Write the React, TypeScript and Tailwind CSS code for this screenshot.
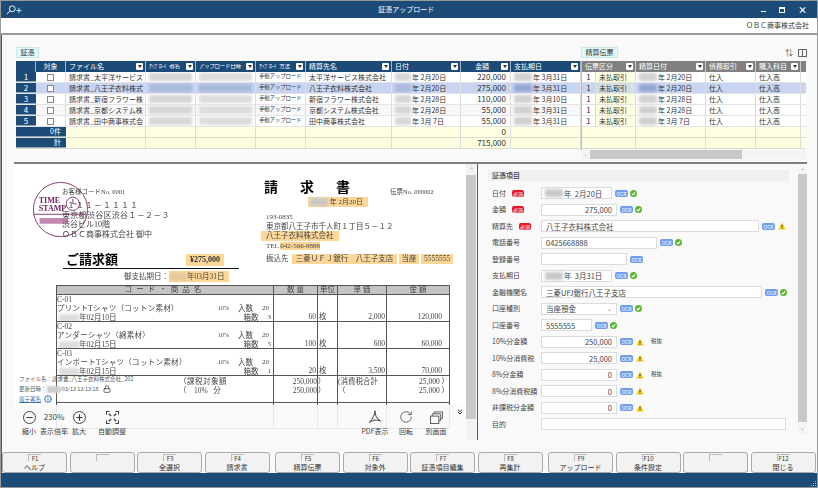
import { ChevronsDown, Info, Lock, Minus, Plus, RotateCw } from "lucide-react";

const jp = "font-['Noto_Sans_CJK_JP','Noto_Sans',sans-serif]";

const leftCols = [
  { name: "ファイル名", w: "w-[80px]" },
  { name: "ｱｯﾌﾟﾛｰﾄﾞ者名", w: "w-[50px]", small: true },
  { name: "アップロード日時", w: "w-[60px]", small: true },
  { name: "ｱｯﾌﾟﾛｰﾄﾞ方法", w: "w-[50px]", small: true },
  { name: "精算先名", w: "w-[86px]" },
  { name: "日付", w: "w-[69px]" },
  { name: "金額", w: "w-[50px]", center: true },
  { name: "支払期日", w: "w-[70px]" },
];

const rightCols = [
  { name: "伝票区分", w: "w-[54px]" },
  { name: "精算日付", w: "w-[70px]" },
  { name: "債務取引", w: "w-[50px]" },
  { name: "購入科目", w: "w-[45px]" },
];

const rows = [
  { file: "請求書_太平洋サービス", to: "太平洋サービス株式会社", date: "2月20日", amt: "220,000", due: "3月31日" },
  { file: "請求書_八王子衣料株式", to: "八王子衣料株式会社", date: "2月20日", amt: "275,000", due: "3月31日" },
  { file: "請求書_新宿フラワー株", to: "新宿フラワー株式会社", date: "2月28日", amt: "110,000", due: "3月10日" },
  { file: "請求書_京都システム株", to: "京都システム株式会社", date: "2月28日", amt: "55,000", due: "3月31日" },
  { file: "請求書_田中商事株式会", to: "田中商事株式会社", date: "3月 7日", amt: "55,000", due: "3月31日" },
];

const fkeys = [
  { k: "F1", label: "ヘルプ" },
  { k: "", label: "" },
  { k: "F3", label: "全選択" },
  { k: "F4", label: "請求書", gap: true },
  { k: "F5", label: "精算伝票" },
  { k: "F6", label: "対象外" },
  { k: "F7", label: "証憑項目編集" },
  { k: "F8", label: "再集計", gap: true },
  { k: "F9", label: "アップロード" },
  { k: "F10", label: "条件設定" },
  { k: "", label: "" },
  { k: "F12", label: "閉じる" },
];

type Field = {
  label: string;
  req?: boolean;
  value?: string;
  blur?: boolean;
  w: string;
  right?: boolean;
  select?: boolean;
  mark?: "ok" | "warn";
  ocr?: boolean;
  note?: string;
};

const fields: Field[] = [
  { label: "日付", req: true, value: "年  2月20日", blur: true, w: "w-[71px]", ocr: true, mark: "ok" },
  { label: "金額", req: true, value: "275,000", w: "w-[76px]", right: true, ocr: true, mark: "ok" },
  { label: "精算先", req: true, value: "八王子衣料株式会社", w: "w-[218px]", ocr: true, mark: "warn" },
  { label: "電話番号", value: "0425668888", w: "w-[116px]", ocr: true, mark: "ok" },
  { label: "登録番号", value: "", w: "w-[86px]", ocr: true },
  { label: "支払期日", value: "年  3月31日", blur: true, w: "w-[71px]", ocr: true, mark: "ok" },
  { label: "金融機関名", value: "三菱UFJ銀行八王子支店", w: "w-[221px]", ocr: true, mark: "ok" },
  { label: "口座種別", value: "当座預金", w: "w-[76px]", select: true, ocr: true, mark: "ok" },
  { label: "口座番号", value: "5555555", w: "w-[51px]", ocr: true, mark: "ok" },
  { label: "10%分金額", value: "250,000", w: "w-[76px]", right: true, ocr: true, mark: "warn", note: "税抜" },
  { label: "10%分消費税", value: "25,000", w: "w-[76px]", right: true, ocr: true, mark: "warn" },
  { label: "8%分金額", value: "0", w: "w-[76px]", right: true, ocr: true, mark: "warn", note: "税抜" },
  { label: "8%分消費税額", value: "0", w: "w-[76px]", right: true, ocr: true, mark: "warn" },
  { label: "非課税分金額", value: "0", w: "w-[76px]", right: true, ocr: true, mark: "warn" },
  { label: "目的", value: "", w: "w-[245px]" },
];

const Dropdown = () => (
  <span className="flex h-[7px] w-[7px] shrink-0 items-center justify-center rounded-[1px] bg-white">
    <span className="h-0 w-0 border-x-[2px] border-t-[3px] border-x-transparent border-t-[#333]" />
  </span>
);

const Blur = ({ w, tone = "bg-[#c8c8c8]" }: { w: string; tone?: string }) => (
  <div className={`h-[8px] ${w} ${tone} blur-[1.5px]`} />
);

const Ocr = () => (
  <span className="flex h-[7px] w-[13px] shrink-0 items-center justify-center rounded-[2px] bg-[#6f9df0] text-[5px] leading-none text-white">
    OCR
  </span>
);

const Ok = () => (
  <svg viewBox="0 0 10 10" className="h-[7px] w-[7px] shrink-0">
    <circle cx="5" cy="5" r="5" fill="#5cb531" />
    <path d="M2.6 5.2 4.4 7l3-3.6" fill="none" stroke="#fff" strokeWidth="1.5" />
  </svg>
);

const Warn = () => (
  <svg viewBox="0 0 10 10" className="h-[8px] w-[8px] shrink-0">
    <path d="M5 .5 9.8 9.5H.2Z" fill="#f7d117" />
    <path d="M5 3.5v3.2M5 7.5v1" stroke="#222" strokeWidth="1.1" />
  </svg>
);

const Cell = ({ className = "", children }: { className?: string; children?: React.ReactNode }) => (
  <div className={`flex h-full shrink-0 items-center overflow-hidden whitespace-nowrap border-r border-[#dcdcdc] px-[3px] ${className}`}>
    {children}
  </div>
);

const HeadCell = ({ name, w, small, center, tone }: { name: string; w: string; small?: boolean; center?: boolean; tone: string }) => (
  <div className={`flex h-full shrink-0 items-center gap-[1px] overflow-hidden whitespace-nowrap border-r border-white/60 pl-[3px] pr-[2px] text-white ${w} ${tone}`}>
    <span className={`min-w-0 flex-1 overflow-hidden ${small ? "text-[5.5px] tracking-[-0.3px]" : "text-[7px]"} ${center ? "text-center" : ""}`}>{name}</span>
    <Dropdown />
  </div>
);

const DataGrid = () => (
  <div className="ml-[2px] flex h-[89px] shrink-0 text-[7px] leading-none text-[#333]">
    <div className="flex w-[565px] shrink-0 flex-col">
      <div className="flex h-[11px] bg-[#1c4b78]">
        <div className="h-full w-[20px] shrink-0 border-r border-white/60" />
        <div className="flex h-full w-[30px] shrink-0 items-center justify-center border-r border-white/60 text-white">対象</div>
        {leftCols.map((c) => (
          <HeadCell key={c.name} {...c} tone="bg-[#1c4b78]" />
        ))}
      </div>
      {rows.map((r, i) => (
        <div key={r.file} className={`flex h-[11px] border-b border-[#e4e4e4] ${i === 1 ? "bg-[#c9d5f0]" : i === 3 ? "bg-[#f8f8f8]" : "bg-white"}`}>
          <div className="flex h-full w-[20px] shrink-0 items-center justify-center border-b border-white/50 bg-[#1c4b78] text-[8px] text-white">{i + 1}</div>
          <Cell className="w-[30px] justify-center">
            <span className="h-[7px] w-[7px] border border-[#888] bg-white" />
          </Cell>
          <Cell className="w-[80px]">{r.file}</Cell>
          <Cell className="w-[50px]"><Blur w="w-[44px]" tone={i === 1 ? "bg-[#a9b8dc]" : "bg-[#d6d6d6]"} /></Cell>
          <Cell className="w-[60px]"><Blur w="w-[54px]" tone={i === 1 ? "bg-[#a9b8dc]" : "bg-[#dcdcdc]"} /></Cell>
          <Cell className="w-[50px] text-[5.5px] tracking-[-0.2px]">手動アップロード</Cell>
          <Cell className="w-[86px]">{r.to}</Cell>
          <Cell className="w-[69px] gap-[1px]">
            <Blur w="w-[16px]" tone={i === 1 ? "bg-[#a9b8dc]" : "bg-[#d6d6d6]"} />
            <span className="whitespace-pre">年 {r.date}</span>
          </Cell>
          <Cell className="w-[50px] justify-end pr-[4px] text-[8px]">{r.amt}</Cell>
          <Cell className="w-[70px] gap-[1px]">
            <Blur w="w-[18px]" tone={i === 1 ? "bg-[#96a8d8]" : "bg-[#d0d0d0]"} />
            <span className="whitespace-pre">年 {r.due}</span>
          </Cell>
        </div>
      ))}
      {["0件", "計"].map((t, i) => (
        <div key={t} className="flex h-[11px] border-b border-[#dcdccc] bg-[#fefee0]">
          <div className="flex h-full w-[50px] shrink-0 items-center justify-end border-b border-white/50 bg-[#1c4b78] pr-[5px] text-white">{t}</div>
          <Cell className="w-[80px]" />
          <Cell className="w-[50px]" />
          <Cell className="w-[60px]" />
          <Cell className="w-[50px]" />
          <Cell className="w-[86px]" />
          <Cell className="w-[69px]" />
          <Cell className="w-[50px] justify-end pr-[4px] text-[8px]">{i === 0 ? "0" : "715,000"}</Cell>
          <Cell className="w-[70px]" />
        </div>
      ))}
    </div>
    <div className="w-[1px] shrink-0 bg-[#bbb]" />
    <div className="flex w-[224px] shrink-0 flex-col overflow-hidden">
      <div className="flex h-[11px] bg-[#808080]">
        {rightCols.map((c) => (
          <HeadCell key={c.name} {...c} tone="bg-[#808080]" />
        ))}
        <div className="h-full flex-1" />
      </div>
      {rows.map((r, i) => (
        <div key={r.file} className={`flex h-[11px] border-b border-[#e4e4e4] ${i === 1 ? "bg-[#c9d5f0]" : "bg-white"}`}>
          <Cell className="w-[14px] justify-center text-[8px]">1</Cell>
          <Cell className={`w-[40px] ${i === 1 ? "bg-[#d5dfe0]" : "bg-[#fefee0]"}`}>未払取引</Cell>
          <Cell className="w-[70px] gap-[1px]">
            <Blur w="w-[18px]" tone={i === 1 ? "bg-[#96a8d8]" : "bg-[#d0d0d0]"} />
            <span className="whitespace-pre">年 {r.date}</span>
          </Cell>
          <Cell className="w-[50px]">仕入</Cell>
          <Cell className="w-[45px]">仕入高</Cell>
        </div>
      ))}
      {[0, 1].map((i) => (
        <div key={i} className="flex h-[11px] border-b border-[#dcdccc] bg-[#fefee0]">
          <Cell className="w-[54px]" />
          <Cell className="w-[70px]" />
          <Cell className="w-[50px]" />
          <Cell className="w-[45px]" />
        </div>
      ))}
    </div>
  </div>
);

const ZoomTool = ({ label, children, w }: { label: string; children: React.ReactNode; w: string }) => (
  <div className={`flex flex-col items-center gap-[2px] ${w}`}>
    <div className="flex h-[16px] items-center justify-center">{children}</div>
    <span className="whitespace-nowrap text-[7px] leading-[9px] text-[#444]">{label}</span>
  </div>
);

const Highlight = ({ className = "", children }: { className?: string; children?: React.ReactNode }) => (
  <span className={`bg-[#fdd798] ${className}`}>{children}</span>
);

const itemRows = [
  { code: "C-01", name: "プリントTシャツ（コットン素材）", d: "年02月10日", q: "60", qty: "3", price: "2,000", total: "120,000" },
  { code: "C-02", name: "アンダーシャツ（綿素材）", d: "年02月15日", q: "100", qty: "5", price: "600", total: "60,000" },
  { code: "C-03", name: "インポートTシャツ（コットン素材）", d: "年02月15日", q: "20", qty: "1", price: "3,500", total: "70,000" },
];

const Invoice = () => (
  <div className="font-['Liberation_Serif','Noto_Sans_CJK_JP',serif] text-[#444] blur-[0.3px]">
    <div className="flex h-[107px]">
      <div className="relative w-[242px] shrink-0 pl-[48px] pt-[23px] text-[8px] leading-[9.8px]">
        <svg viewBox="0 0 60 60" className="absolute left-[18px] top-[17px] h-[57px] w-[57px]">
          <circle cx="30" cy="30" r="28.5" fill="none" stroke="#82386f" strokeWidth="1" />
          <path d="M1.5 35H58" stroke="#82386f" strokeWidth="1" />
          <circle cx="43" cy="24" r="7" fill="none" stroke="#82386f" strokeWidth="1" />
          <path d="M43 19v5h4" fill="none" stroke="#82386f" strokeWidth="1" />
          <text x="7" y="23" fontSize="8.5" fontWeight="700" fill="#6d2a60" fontFamily="Liberation Serif">TIME</text>
          <text x="7" y="32" fontSize="8.5" fontWeight="700" fill="#6d2a60" fontFamily="Liberation Serif">STAMP</text>
          <rect x="8" y="39" width="30" height="6" fill="#a8578f" opacity="0.7" />
        </svg>
        <p className="text-[6.5px]">お客様コードNo. 0001</p>
        <p className="mt-[4px] pl-[5px] tracking-[1px]">１１１－１１１１</p>
        <p className="tracking-[0.3px]">東京都渋谷区渋谷１－２－３</p>
        <p>渋谷ビル10階</p>
        <p>ＯＢＣ商事株式会社 御中</p>
        <div className="ml-[1px] mt-[13px] flex w-[176px] items-center justify-between border-b border-[#111] pb-[1px] pr-[15px]">
          <span className="pl-[3px] text-[13px] font-bold leading-[14px] text-black">ご請求額</span>
          <Highlight className="w-[38px] py-[1px] text-center text-[8px] font-bold text-[#333]">¥275,000</Highlight>
        </div>
      </div>
      <div className="w-[210px] shrink-0 pl-[5px] pt-[15px]">
        <div className="flex items-end pl-[3px]">
          <span className="w-[126px] whitespace-pre text-[14px] font-bold leading-[18px] tracking-[22px] text-black">請求書</span>
          <span className="text-[6.5px] leading-[10px]">伝票No. 000002</span>
        </div>
        <Highlight className="ml-[47px] flex w-[60px] items-center pl-[2px] text-[7px] leading-[10px]">
          <Blur w="w-[18px]" />
          <span className="whitespace-pre"> 年 2月20日</span>
        </Highlight>
        <p className="mt-[5px] pl-[5px] text-[7px] leading-[10px]">193-0835</p>
        <p className="whitespace-nowrap pl-[5px] text-[7.5px] leading-[9px]">東京都八王子市千人町１丁目５－１２</p>
        <Highlight className="block w-[78px] whitespace-nowrap pl-[5px] text-[7.5px] leading-[10px]">八王子衣料株式会社</Highlight>
        <p className="pl-[5px] text-[7px] leading-[10px]">TEL <Highlight>042-566-8888</Highlight></p>
        <div className="mt-[3px] flex items-center gap-[2px] pl-[5px] text-[7.5px] leading-[10px]">
          <span className="w-[24px]">振込先</span>
          <Highlight className="w-[105px] whitespace-nowrap text-center">三菱ＵＦＪ銀行　八王子支店</Highlight>
          <Highlight className="w-[20px] text-center">当座</Highlight>
          <Highlight className="w-[32px] text-center">5555555</Highlight>
        </div>
      </div>
    </div>
    <div className="flex h-[14px] items-start pl-[110px] text-[7.5px] leading-[11px]">
      <span className="whitespace-nowrap">御支払期日：</span>
      <Highlight className="flex w-[60px] items-center pl-[1px]">
        <Blur w="w-[17px]" tone="bg-[#e8c8a0]" />
        <span className="whitespace-nowrap">年03月31日</span>
      </Highlight>
    </div>
    <div className="ml-[42px] w-[394px] border-x border-[#555] text-[7.5px] leading-[9px]">
      <div className="flex h-[10px] items-center border-y border-[#555] bg-[#c4c4c4] text-center leading-none">
        <span className="w-[216px] tracking-[4px]">コード・商品名</span>
        <span className="w-[44px] border-l border-[#555]">数 量</span>
        <span className="w-[20px] border-l border-[#555]">単位</span>
        <span className="w-[49px] border-l border-[#555]">単 価</span>
        <span className="flex-1 border-l border-[#555]">金 額</span>
      </div>
      {itemRows.map((r) => (
        <div key={r.code} className="flex h-[27px] border-b border-[#555]">
          <div className="w-[216px] overflow-hidden whitespace-nowrap">
            <p>{r.code}</p>
            <p className="flex justify-between pr-[4px]">
              <span className="tracking-[0.3px]">{r.name}</span>
              <span className="flex gap-[9px]"><span className="text-[6px]">10%</span><span>入数</span><span className="text-[7px]">20</span></span>
            </p>
            <p className="flex justify-between pr-[2px]">
              <span className="flex items-center pl-[2px]"><Blur w="w-[20px]" tone="bg-[#ddd]" />{r.d}</span>
              <span className="flex gap-[9px]"><span>箱数</span><span className="text-[7px]">{r.qty}</span></span>
            </p>
          </div>
          <div className="flex w-[44px] items-end justify-end border-l border-[#555] pr-[1px]">{r.q}</div>
          <div className="flex w-[20px] items-end border-l border-[#555] pl-[1px]">枚</div>
          <div className="flex w-[49px] items-end justify-end border-l border-[#555] pr-[1px]">{r.price}</div>
          <div className="flex flex-1 items-end justify-end border-l border-[#555] pr-[7px]">{r.total}</div>
        </div>
      ))}
      <div className="flex h-[27px] border-b border-[#555]">
        <div className="w-[216px] pl-[122px] pt-[1px]">
          <p className="whitespace-nowrap tracking-[0.5px]">（課税対象額</p>
          <p className="whitespace-pre">（    10%   分</p>
        </div>
        <div className="w-[44px] border-l border-[#555] pt-[1px] text-right"><p>250,000</p><p>250,000</p></div>
        <div className="w-[20px] border-l border-[#555] pt-[1px]"><p>）</p><p>）</p></div>
        <div className="w-[49px] border-l border-[#555] pt-[1px]"><p className="whitespace-nowrap">(消費税合計</p><p>（</p></div>
        <div className="flex-1 border-l border-[#555] pt-[1px] text-right"><p>25,000 ）</p><p>25,000 ）</p></div>
      </div>
      <div className="flex h-[26px] border-b border-[#555]">
        <div className="w-[216px]" />
        <div className="w-[44px] border-l border-[#555]" />
        <div className="w-[20px] border-l border-[#555]" />
        <div className="w-[49px] border-l border-[#555]" />
        <div className="flex-1 border-l border-[#555]" />
      </div>
    </div>
  </div>
);

const DocumentPane = () => (
  <div className={`relative flex h-[276px] w-[462px] shrink-0 overflow-hidden bg-white ${jp}`}>
    <div className="w-[452px] shrink-0">
      <Invoice />
    </div>
    <div className="flex h-full w-[10px] shrink-0 flex-col bg-[#f2f2f2]">
      <div className="h-[11px] text-center text-[6px] leading-[11px] text-[#999]">⌃</div>
      <div className="h-[244px] bg-[#c8c8c8]" />
    </div>
    {/* ファイル情報 */}
    <div className="absolute bottom-[35px] left-0 w-[145px] pb-[1px] pl-[5px] pt-[1px] text-[5.5px] leading-[10px] text-[#555]">
      <p className="whitespace-nowrap">ファイル名：請求書_八王子衣料株式会社_202</p>
      <p className="flex items-center whitespace-nowrap">
        更新日時：<span className="h-[7px] w-[13px] bg-[#ccc] blur-[1px]" />/03/13 13:13:18
        <Lock className="ml-[4px] h-[8px] w-[8px] text-[#222]" />
      </p>
      <p className="flex items-center gap-[3px] text-[#3a6fb0] underline">
        電子署名 <Info className="h-[8px] w-[8px]" strokeWidth={3} />
      </p>
    </div>
    {/* ツールバー */}
    <div className="absolute bottom-0 left-0 right-[10px] flex h-[35px] items-start justify-between bg-[#fafafa]/90 pl-[4px] pr-[2px] pt-[4px]">
      <div className="flex items-start">
        <ZoomTool label="縮小" w="w-[22px]">
          <span className="flex h-[13px] w-[13px] items-center justify-center rounded-full border border-[#444]"><Minus className="h-[9px] w-[9px] text-[#333]" strokeWidth={3} /></span>
        </ZoomTool>
        <ZoomTool label="表示倍率" w="w-[28px]">
          <span className="text-[8px] text-[#444]">230%</span>
        </ZoomTool>
        <ZoomTool label="拡大" w="w-[22px]">
          <span className="flex h-[13px] w-[13px] items-center justify-center rounded-full border border-[#444]"><Plus className="h-[9px] w-[9px] text-[#333]" strokeWidth={3} /></span>
        </ZoomTool>
        <ZoomTool label="自動調整" w="w-[44px]">
          <svg viewBox="0 0 14 14" className="h-[13px] w-[13px]" fill="none" stroke="#444">
            <path d="M.5 4V.5H4M10 .5h3.5V4M.5 10v3.5H4M10 13.5h3.5V10" strokeWidth="1.2" />
            <path d="M3 3l2.5 2.5M11 3 8.5 5.5M3 11l2.5-2.5M11 11 8.5 8.5" strokeWidth="1.5" />
          </svg>
        </ZoomTool>
      </div>
      <div className="flex items-start gap-[9px]">
        <ZoomTool label="PDF表示" w="w-[24px]">
          <svg viewBox="0 0 16 16" className="h-[14px] w-[14px]" fill="none" stroke="#333" strokeWidth="1.1">
            <path d="M8 1C7.5 5 6 9.5 1.5 14.5M8 1c0 5 2 9 6.5 11.5M2 14c4-3 8-3 12.5-1.5" />
          </svg>
        </ZoomTool>
        <ZoomTool label="回転" w="w-[20px]">
          <RotateCw className="h-[14px] w-[14px] text-[#444]" strokeWidth={1.3} />
        </ZoomTool>
        <ZoomTool label="別画面" w="w-[22px]">
          <svg viewBox="0 0 14 14" className="h-[13px] w-[13px]" fill="none" stroke="#555">
            <rect x=".5" y="5.5" width="9" height="8" />
            <path d="M2.5 5.5v-2.5h9v7.5h-2M4.5 3V1h9v7h-2" />
          </svg>
        </ZoomTool>
        <ChevronsDown className="-mt-[1px] h-[8px] w-[8px] text-[#222]" strokeWidth={3} />
      </div>
    </div>
  </div>
);

const FieldPane = () => (
  <div className={`flex min-w-0 flex-1 ${jp}`}>
    <div className="flex min-w-0 flex-1 flex-col pl-[10px] pr-[9px] pt-[6px] text-[7px] leading-none text-[#444]">
      <div className="flex h-[11px] shrink-0 items-center bg-[#f0f0f0] pl-[4px] font-medium">証憑項目</div>
      <div className="mt-[4px] flex flex-col">
        {fields.map((f) => (
          <div key={f.label} className="flex h-[16.5px] items-center">
            <div className="flex w-[53px] shrink-0 items-center gap-[6px] overflow-hidden whitespace-nowrap pl-[4px]">
              <span className="shrink-0">{f.label}</span>
              {f.req && (
                <span className="flex h-[7px] w-[12px] shrink-0 items-center justify-center rounded-[2px] bg-[#e8142a] text-[5px] text-white">必須</span>
              )}
            </div>
            <div className={`flex h-[12px] shrink-0 items-center gap-[1px] border border-[#dcdcdc] bg-white px-[4px] text-[8px] ${f.w} ${f.right ? "justify-end" : ""} ${f.select ? "justify-between" : ""}`}>
              {f.blur && <Blur w="w-[18px] -ml-[1px]" />}
              <span className="whitespace-pre text-[7.5px]">{f.value}</span>
              {f.select && <span className="text-[6px] text-[#777]">⌄</span>}
            </div>
            {f.ocr && <span className="ml-[3px]"><Ocr /></span>}
            {f.mark === "ok" && <span className="ml-[2px] flex"><Ok /></span>}
            {f.mark === "warn" && <span className="ml-[3px] flex"><Warn /></span>}
            {f.note && <span className="ml-[7px] text-[5.5px]">{f.note}</span>}
          </div>
        ))}
      </div>
    </div>
    <div className="mt-[3px] flex h-[267px] w-[9px] shrink-0 flex-col bg-[#f4f4f4] text-center text-[6px] leading-[7px] text-[#999]">
      <div className="h-[7px]">⌃</div>
      <div className="h-[248px] bg-[#c8c8c8]" />
      <div className="h-[12px] leading-[12px]">⌄</div>
    </div>
  </div>
);

export default function App() {
  return (
    <div className={`flex h-[488px] w-[818px] flex-col overflow-hidden border border-[#9a9a9a] bg-[#f9f9f9] ${jp}`}>
      <header className="flex h-[17px] shrink-0 items-center justify-between bg-[#1c4b78] pl-[5px] pr-[10px] text-white">
        <span className="flex items-center text-[10px] leading-none">
          <svg viewBox="0 0 12 12" className="h-[10px] w-[10px]" fill="none" stroke="#fff" strokeWidth="1.1">
            <circle cx="7.5" cy="4.5" r="3.5" />
            <path d="M5 7 1 11" />
          </svg>
          +
        </span>
        <span className="pl-[30px] text-[7px] leading-none">証憑アップロード</span>
        <span className="flex items-center gap-[13px] text-[#fff]">
          <span className="mt-[4px] h-[1px] w-[5px] bg-white" />
          <span className="h-[6px] w-[6px] border border-white border-t-2" />
          <span className="text-[9px] font-bold leading-none">×</span>
        </span>
      </header>
      <div className="flex h-[17px] shrink-0 items-center justify-end border-b-2 border-[#999] bg-white pr-[8px] text-[7px] text-[#333]">
        ＯＢＣ商事株式会社
      </div>
      <main className="flex min-h-0 flex-1 flex-col border-l border-[#555] pl-[12px] pr-[10px]">
        <div className="ml-[2px] flex h-[26px] shrink-0 items-end pb-[3px] text-[7px] leading-none text-[#333]">
          <span className="flex h-[11px] w-[23px] items-center justify-center border border-[#cde8e8] bg-[#dff8fa]">証憑</span>
          <span className="ml-[542px] flex h-[11px] w-[37px] items-center justify-center border border-[#cde8e8] bg-[#dff8fa]">精算伝票</span>
          <span className="ml-auto text-[8px] leading-[11px] text-[#555]">⇅</span>
          <span className="ml-[5px] mb-[1px] h-[8px] w-[9px] border border-[#666] bg-[linear-gradient(90deg,transparent_45%,#666_45%,#666_55%,transparent_55%)]" />
        </div>
        <DataGrid />
        <div className="ml-[568px] flex h-[9px] w-[224px] shrink-0 items-center bg-[#f4f4f4]">
          <span className="w-[8px] text-center text-[6px] leading-none text-[#aaa]">‹</span>
          <span className="h-full w-[152px] bg-[#c8c8c8]" />
        </div>
        <div className="mt-[3px] flex min-h-0 flex-1 border-t-2 border-[#808080]">
          <DocumentPane />
          <div className="ml-[1px] h-[276px] w-[1px] shrink-0 bg-[#555]" />
          <FieldPane />
        </div>
      </main>
      <nav className="flex h-[21px] shrink-0 items-stretch gap-[2.5px] border-l border-[#555] bg-[#f9f9f9]">
        {fkeys.map((f, i) => (
          <button
            key={i}
            className={`flex h-[21px] w-[65px] shrink-0 flex-col items-center justify-start rounded-[3px] border border-[#aaa] bg-[#f2f2f2] pt-[1px] leading-none text-[#333] ${f.gap ? "mr-[3px]" : ""}`}
          >
            <span className="h-[7px] min-w-[13px] border-l border-t border-[#bbb] px-[1px] text-center text-[6px] leading-[7px]">{f.k}</span>
            <span className="mt-[2px] whitespace-nowrap text-[7px] leading-[9px]">{f.label}</span>
          </button>
        ))}
      </nav>
      <footer className="flex h-[14px] shrink-0 items-end justify-end bg-[#1c4b78]">
        <svg viewBox="0 0 6 6" className="h-[6px] w-[6px]" fill="#9fb4c8">
          <rect x="4" y="0" width="1" height="1" />
          <rect x="2" y="2" width="1" height="1" />
          <rect x="4" y="2" width="1" height="1" />
          <rect x="0" y="4" width="1" height="1" />
          <rect x="2" y="4" width="1" height="1" />
          <rect x="4" y="4" width="1" height="1" />
        </svg>
      </footer>
    </div>
  );
}
